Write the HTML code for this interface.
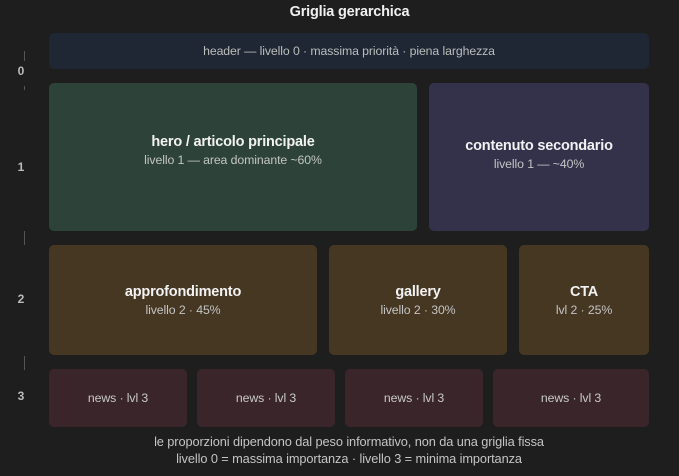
<html><head><style>
body{margin:0;width:679px;height:476px;background:#1e1e1e;font-family:"Liberation Sans",sans-serif;position:relative;overflow:hidden;color:#eee}
.b{position:absolute;border-radius:5px;display:flex;flex-direction:column;align-items:center;justify-content:center;text-align:center;box-sizing:border-box}
.t{font-weight:bold;font-size:14.5px;color:#f2f2f2;letter-spacing:-0.2px}
.s{font-size:12.3px;color:#c4c4c4;margin-top:3px;letter-spacing:-0.1px}
.n{font-size:12.3px;color:#c8c8c8;letter-spacing:-0.1px}
.l{position:absolute;left:14px;width:14px;text-align:center;font-size:12px;color:#bbb;font-weight:bold}
.k{position:absolute;left:24px;width:1px;background:#555}
</style></head><body>
<div style="position:absolute;top:4px;left:0;width:699px;text-align:center;font-weight:bold;font-size:14.5px;color:#f0f0f0;letter-spacing:-0.2px">Griglia gerarchica</div>
<div class="k" style="top:51px;height:10px"></div><div class="k" style="top:86px;height:4px"></div>
<div class="k" style="top:231px;height:14px"></div><div class="k" style="top:356px;height:14px"></div>
<div class="l" style="top:64px">0</div><div class="l" style="top:160px">1</div>
<div class="l" style="top:292px">2</div><div class="l" style="top:389px">3</div>
<div class="b" style="left:49px;top:33px;width:600px;height:36px;background:#1e2733"><div class="n" style="color:#bdbdbd">header — livello 0 · massima priorità · piena larghezza</div></div>
<div class="b" style="left:49px;top:83px;width:368px;height:148px;background:#2d433a;padding-bottom:14px"><div class="t">hero / articolo principale</div><div class="s">livello 1 — area dominante ~60%</div></div>
<div class="b" style="left:429px;top:83px;width:220px;height:148px;background:#34314a;padding-bottom:6px"><div class="t">contenuto secondario</div><div class="s">livello 1 — ~40%</div></div>
<div class="b" style="left:49px;top:245px;width:268px;height:110px;background:#463723"><div class="t">approfondimento</div><div class="s">livello 2 · 45%</div></div>
<div class="b" style="left:329px;top:245px;width:178px;height:110px;background:#463723"><div class="t">gallery</div><div class="s">livello 2 · 30%</div></div>
<div class="b" style="left:519px;top:245px;width:130px;height:110px;background:#463723"><div class="t">CTA</div><div class="s">lvl 2 · 25%</div></div>
<div class="b" style="left:49px;top:369px;width:138px;height:58px;background:#3a262a"><div class="n">news · lvl 3</div></div>
<div class="b" style="left:197px;top:369px;width:138px;height:58px;background:#3a262a"><div class="n">news · lvl 3</div></div>
<div class="b" style="left:345px;top:369px;width:138px;height:58px;background:#3a262a"><div class="n">news · lvl 3</div></div>
<div class="b" style="left:493px;top:369px;width:156px;height:58px;background:#3a262a"><div class="n">news · lvl 3</div></div>
<div style="position:absolute;left:49px;width:600px;top:433px;text-align:center;font-size:12.8px;color:#c4c4c4;line-height:17px;letter-spacing:-0.1px">le proporzioni dipendono dal peso informativo, non da una griglia fissa<br>livello 0 = massima importanza · livello 3 = minima importanza</div>
</body></html>
